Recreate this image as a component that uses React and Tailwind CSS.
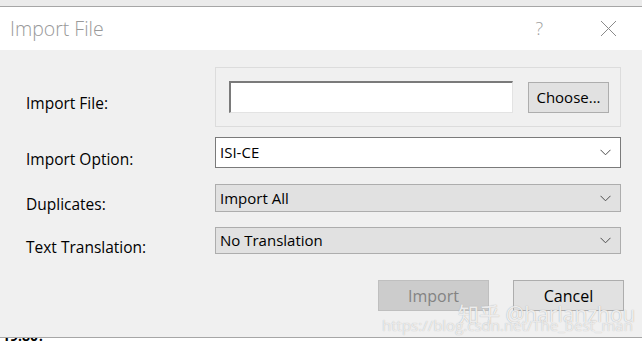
import { useState } from 'react';

const Chevron = () => (
    <svg width="11" height="7" viewBox="0 0 11 7" className="shrink-0">
        <path d="M0.5 0.8 L5.5 5.8 L10.5 0.8" fill="none" stroke="#4d4d4d" strokeWidth="1" />
    </svg>
);

const Combo = ({ value, active, h }) => (
    <div
        className={`w-[406px] flex items-center justify-between pl-[4px] pr-[9px] border text-[15px] text-black ${h} ${active
            ? 'bg-white border-[#7a7a7a]'
            : 'bg-[#e1e1e1] border-[#adadad]'
            }`}
    >
        <span>{value}</span>
        <Chevron />
    </div>
);

// label sits a few px below the centre of its control, as in the dialog
const Row = ({ label, children, top }) => (
    <div className={`flex items-center ${top}`}>
        <div className="w-[215px] pl-[26px] mt-[6px] -mb-[6px] leading-[20px] text-[15.5px] text-black">{label}</div>
        {children}
    </div>
);

export default function App() {
    const [path, setPath] = useState('');

    return (
        <div
            className="w-[642px] h-[342px] overflow-hidden bg-[#f0f0f0] relative flex flex-col"
            style={{ fontFamily: '"Open Sans", "Noto Sans CJK SC", sans-serif' }}
        >
            {/* Window top edge */}
            <div className="h-[7px] bg-[#ebebeb] border-b border-[#a6a6a6] shrink-0" />

            {/* Title bar */}
            <div className="h-[43px] bg-white flex items-center pl-[10px] shrink-0">
                <span className="text-[19.5px] text-[#999999] font-light">Import File</span>
                <span className="ml-auto text-[18px] text-[#a0a0a0] font-light mr-[57px]">?</span>
                <svg width="17" height="17" viewBox="0 0 17 17" className="mr-[25px]">
                    <path d="M1 1 L16 16 M16 1 L1 16" stroke="#8a8a8a" strokeWidth="1" />
                </svg>
            </div>

            {/* Body */}
            <div className="flex-1 flex flex-col">
                <Row label="Import File:" top="mt-[17px]">
                    <div className="w-[406px] h-[60px] border border-[#dcdcdc] flex items-center pl-[13px]">
                        <input
                            value={path}
                            onChange={(e) => setPath(e.target.value)}
                            className="w-[284px] h-[32px] bg-white border-t-2 border-l-2 border-t-[#7a7a7a] border-l-[#7a7a7a] border-b border-r border-b-[#e3e3e3] border-r-[#e3e3e3] outline-none"
                        />
                        <button className="ml-[15px] w-[81px] h-[31px] bg-[#e1e1e1] border border-[#adadad] text-[15px] text-black">
                            Choose...
                        </button>
                    </div>
                </Row>

                <Row label="Import Option:" top="mt-[10px]">
                    <Combo value="ISI-CE" active h="h-[31px]" />
                </Row>

                <Row label="Duplicates:" top="mt-[16px]">
                    <Combo value="Import All" h="h-[28px]" />
                </Row>

                <Row label="Text Translation:" top="mt-[15px]">
                    <Combo value="No Translation" h="h-[27px]" />
                </Row>

                {/* Buttons */}
                <div className="flex justify-end mt-[26px] pr-[18px] gap-[24px]">
                    <button className="w-[111px] h-[31px] bg-[#cccccc] border border-[#bfbfbf] text-[16px] text-[#838383]">
                        Import
                    </button>
                    <button className="w-[111px] h-[31px] bg-[#e1e1e1] border border-[#adadad] text-[16px] text-black">
                        Cancel
                    </button>
                </div>
            </div>

            {/* Window bottom edge and the page behind */}
            <div className="h-[5px] bg-white border-t border-[#a6a6a6] shrink-0 overflow-hidden">
                <div className="text-[14px] font-bold leading-[14px] -mt-[9px] pl-[2px] text-black">19:80?</div>
            </div>

            {/* Watermarks */}
            <div className="absolute left-[458px] top-[304px] text-[21px] text-white/80 [text-shadow:0_0_1px_#9a9a9a] leading-none">
                知乎 @harlanzhou
            </div>
            <div className="absolute left-[382px] top-[318px] text-[15px] text-white/70 [text-shadow:0_0_1px_#b0b0b0] leading-none">
                https://blog.csdn.net/The_best_man
            </div>
        </div>
    );
}
